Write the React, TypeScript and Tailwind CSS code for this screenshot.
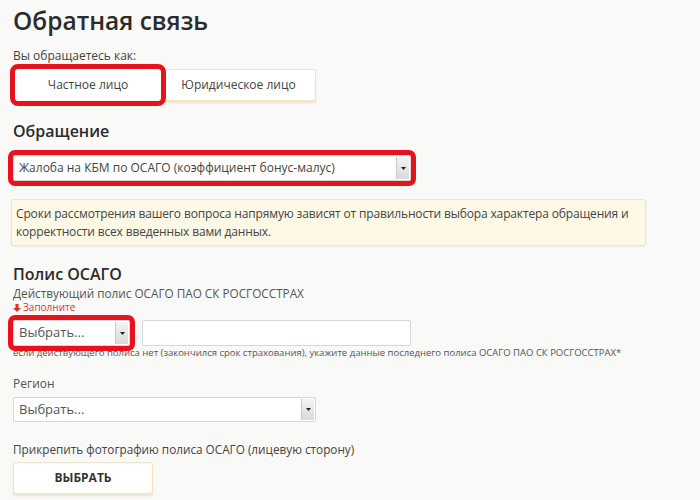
import React from "react";

const Arrow: React.FC<{ h: string }> = ({ h }) => (
  <div className={`absolute right-[1px] top-[1px] ${h} w-[13px] border-l border-[#c8c8c8] bg-gradient-to-b from-[#f4f4f4] to-[#d9d9d9] flex items-center justify-center`}>
    <svg width="5" height="3" viewBox="0 0 5 3">
      <path d="M0 0 L5 0 L2.5 3 Z" fill="#222" />
    </svg>
  </div>
);

export default function App() {
  return (
    <div
      className="w-[700px] h-[500px] overflow-hidden bg-[#f9f9f8] px-[13px] text-[#333]"
      style={{ fontFamily: '"Open Sans", "Liberation Sans", sans-serif' }}
    >
      <h1 className="text-[24.5px] leading-[40px] pt-[1px] font-semibold text-[#2b2b2b]">Обратная связь</h1>

      <div className="mt-[7px] text-[12px] leading-[16px] text-[#444]">Вы обращаетесь как:</div>
      <div className="mt-[5px] flex pl-[2px]">
        <button className="w-[146px] h-[32px] bg-white rounded-[3px] text-[12px] text-[#444] outline-[5px] outline-solid outline-[#e8121c] z-10">
          Частное лицо
        </button>
        <button className="w-[155px] h-[32px] bg-white rounded-[3px] border border-[#f0e4c4] shadow-[0_2px_2px_rgba(220,190,120,0.35)] text-[12px] text-[#444]">
          Юридическое лицо
        </button>
      </div>

      <h2 className="mt-[18px] text-[16px] leading-[24px] font-semibold text-[#2b2b2b]">Обращение</h2>
      <div className="mt-[12px] relative w-[398px] h-[26px] bg-white border border-[#d6d6d6] rounded-[2px] outline-[5px] outline-solid outline-[#e8121c] flex items-center pl-[5px] text-[12px] text-[#444]">
        Жалоба на КБМ по ОСАГО (коэффициент бонус-малус)
        <Arrow h="h-[22px]" />
      </div>

      <div className="mt-[18px] ml-[-2px] w-[635px] bg-[#fdf9e6] border border-[#efe4c6] rounded-[3px] pt-[5px] pb-[4px] px-[4px] text-[12px] leading-[18px] tracking-[-0.15px] text-[#444] shadow-[0_1px_2px_rgba(200,180,120,0.2)]">
        Сроки рассмотрения вашего вопроса напрямую зависят от правильности выбора характера обращения и корректности всех введенных вами данных.
      </div>

      <h2 className="mt-[17px] text-[16px] leading-[22px] font-semibold text-[#2b2b2b]">Полис ОСАГО</h2>
      <div className="text-[11.75px] leading-[16px] text-[#555]">Действующий полис ОСАГО ПАО СК РОСГОССТРАХ</div>
      <div className="flex items-center gap-[2px] text-[10px] leading-[13px] text-[#e0332f]">
        <svg width="8" height="8" viewBox="0 0 8 8">
          <path d="M2.5 0 H5.5 V4 H8 L4 8 L0 4 H2.5 Z" fill="#d9302c" />
        </svg>
        Заполните
      </div>
      <div className="mt-[6px] flex items-center gap-[12px]">
        <div className="relative w-[117px] h-[26px] bg-white border border-[#d6d6d6] rounded-[2px] outline-[5px] outline-solid outline-[#e8121c] flex items-center pl-[5px] text-[13px] text-[#555]">
          Выбрать...
          <Arrow h="h-[22px]" />
        </div>
        <div className="w-[269px] h-[26px] bg-white border border-[#d6d6d6] rounded-[2px]" />
      </div>
      <div className="text-[9.5px] leading-[14px] text-[#555]">
        если действующего полиса нет (закончился срок страхования), укажите данные последнего полиса ОСАГО ПАО СК РОСГОССТРАХ*
      </div>

      <div className="mt-[16px] text-[12px] leading-[16px] text-[#555]">Регион</div>
      <div className="mt-[5px] relative w-[303px] h-[25px] bg-white border border-[#d6d6d6] rounded-[2px] flex items-center pl-[5px] text-[13px] text-[#555]">
        Выбрать...
        <Arrow h="h-[21px]" />
      </div>

      <div className="mt-[19px] text-[11.75px] leading-[16px] text-[#444]">Прикрепить фотографию полиса ОСАГО (лицевую сторону)</div>
      <button className="mt-[5px] w-[140px] h-[32px] bg-white rounded-[3px] border border-[#f0e4c4] shadow-[0_2px_2px_rgba(220,190,120,0.35)] text-[12px] font-bold text-[#333]">
        ВЫБРАТЬ
      </button>
    </div>
  );
}
